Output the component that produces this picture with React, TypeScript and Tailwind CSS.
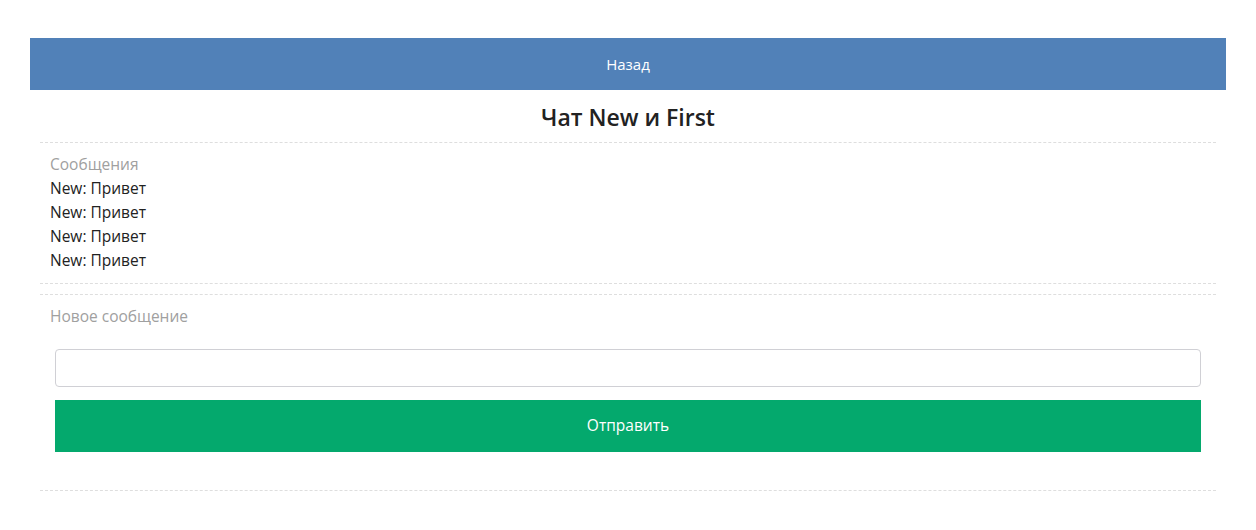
const messages = ['Привет', 'Привет', 'Привет', 'Привет'];

function App() {
    return (
        <div className="min-h-screen bg-white pt-[38px] px-[30px] text-[#222]" style={{ fontFamily: '"Open Sans", "Noto Sans", sans-serif' }}>
            <button className="w-full h-[52px] bg-[#5181b8] text-white text-[15px]">Назад</button>
            <div className="mx-[10px]">
                <h1 className="mt-[13px] mb-[11px] text-center text-[23px] leading-[28px] font-semibold text-[#222]">Чат New и First</h1>
                <div className="border-y border-dashed border-[#dedede] pt-[9px] pb-[11px]">
                    <div className="px-[10px] text-[15.5px] leading-[24px] text-[#a0a0a0]">Сообщения</div>
                    {messages.map((m, i) => (
                        <div key={i} className="px-[10px] text-[15.5px] leading-[24px] text-[#222]">New: {m}</div>
                    ))}
                </div>
                <div className="mt-[10px] border-y border-dashed border-[#dedede] pt-[9px] pb-[38px]">
                    <div className="px-[10px] text-[15.5px] leading-[24px] text-[#a0a0a0]">Новое сообщение</div>
                    <div className="px-[15px] mt-[21px] flex flex-col gap-[13px]">
                        <input className="h-[38px] w-full rounded-[4px] border border-[#d0d0d5] px-3 outline-none" />
                        <button className="h-[52px] w-full bg-[#04a96d] text-white text-[15.5px]">Отправить</button>
                    </div>
                </div>
            </div>
        </div>
    );
}

export default App;
